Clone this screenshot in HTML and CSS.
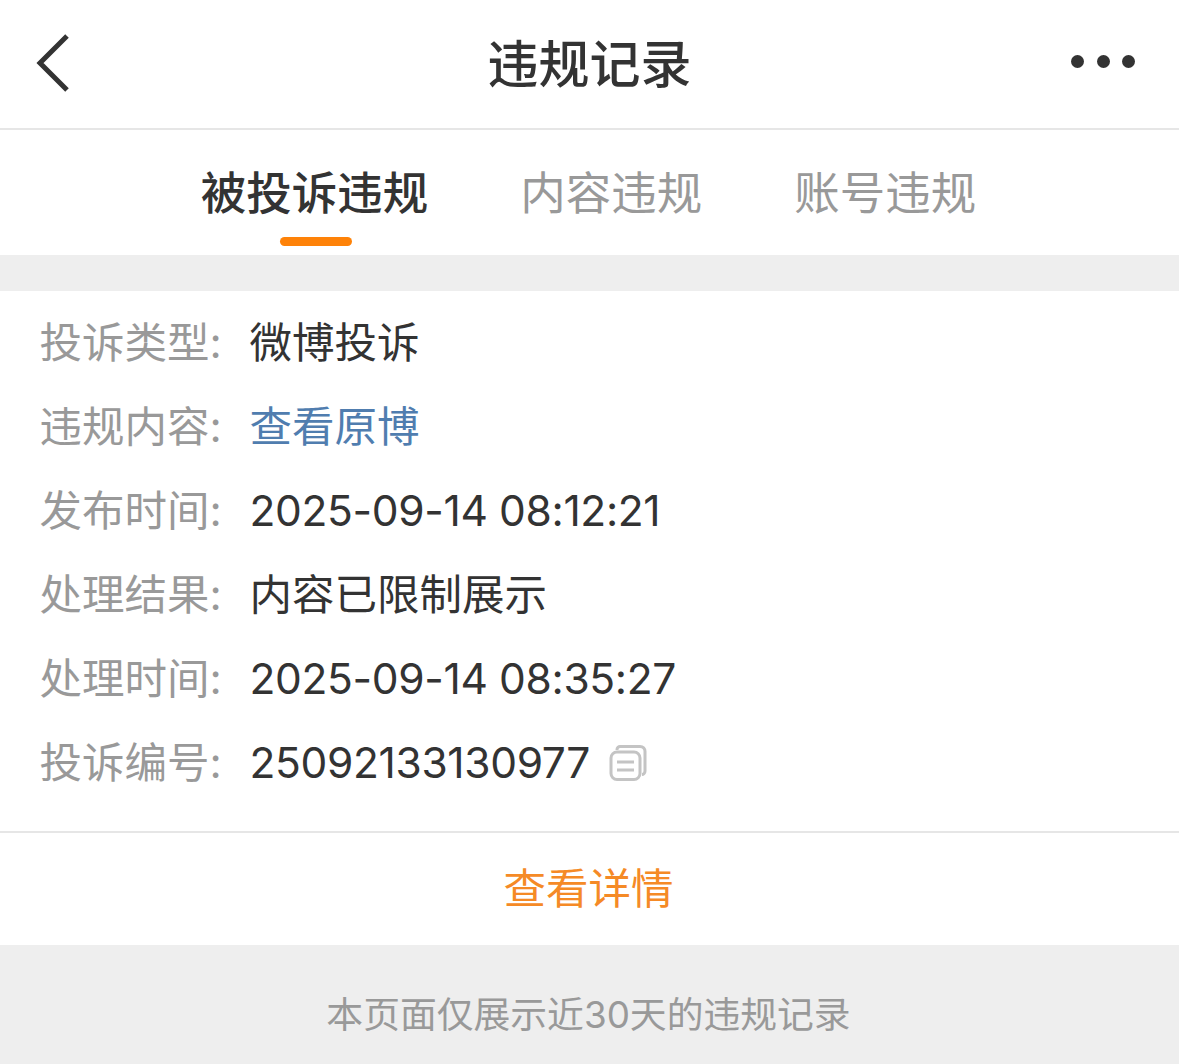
FILE: index.html
```html
<!DOCTYPE html>
<html lang="zh-CN">
<head>
<meta charset="utf-8">
<title>违规记录</title>
<link rel="stylesheet" href="styles.css">
</head>
<body>
<header class="nav">
  <svg class="back" width="34" height="58" viewBox="0 0 34 58"><path d="M32 2 5 29l27 27" fill="none" stroke="#333" stroke-width="5"/></svg>
  <h1 class="title">违规记录</h1>
  <div class="more"><i></i><i></i><i></i></div>
</header>
<nav class="tabs">
  <div class="tab active">被投诉违规<span class="bar"></span></div>
  <div class="tab">内容违规</div>
  <div class="tab">账号违规</div>
</nav>
<main class="card">
  <dl class="rows">
    <div class="row"><dt>投诉类型:</dt><dd>微博投诉</dd></div>
    <div class="row"><dt>违规内容:</dt><dd class="link">查看原博</dd></div>
    <div class="row"><dt>发布时间:</dt><dd class="num">2025-09-14 08:12:21</dd></div>
    <div class="row"><dt>处理结果:</dt><dd>内容已限制展示</dd></div>
    <div class="row"><dt>处理时间:</dt><dd class="num">2025-09-14 08:35:27</dd></div>
    <div class="row"><dt>投诉编号:</dt><dd class="num">25092133130977</dd>
      <svg class="copy" width="38" height="36" viewBox="0 0 38 36" fill="none" stroke="#c4c4c4" stroke-width="3"><path d="M8 5V4.500C8 2.800 9.500 1.500 11 1.500H31C34 1.500 36 3.500 36 6.500V26C36 28 34.500 29.500 33 29.500"/><rect x="2" y="7" width="29" height="27.500" rx="6"/><path d="M8 17H25M8 25H25"/></svg>
    </div>
  </dl>
  <div class="detail">查看详情</div>
</main>
<footer class="foot">本页面仅展示近30天的违规记录</footer>
</body>
</html>
```
FILE: styles.css
```css
* { box-sizing: border-box; }
html, body { margin: 0; padding: 0; }
body {
  width: 1179px;
  height: 1064px;
  overflow: hidden;
  background: #fff;
  color: #333;
  font-family: Inter, "Noto Sans CJK SC", "Noto Sans", sans-serif;
}
.nav {
  height: 130px;
  border-bottom: 2px solid #e6e6e6;
  display: flex;
  align-items: center;
  justify-content: space-between;
  padding: 0 44px 0 35px;
  position: relative;
}
.back { margin-bottom: 2px; }
.title {
  position: absolute;
  left: 0;
  right: 0;
  top: 32px;
  margin: 0;
  text-align: center;
  font-size: 51px;
  line-height: 66px;
  font-weight: 500;
}
.more { display: flex; gap: 12.500px; margin-bottom: 5px; }
.more i { width: 13px; height: 13px; border-radius: 50%; background: #333; display: block; }
.tabs {
  height: 125px;
  display: flex;
  justify-content: center;
  gap: 92px;
  padding: 33px 2px 0 0;
}
.tab {
  position: relative;
  font-size: 45.500px;
  line-height: 62px;
  color: #999;
}
.tab.active { color: #333; font-weight: 500; }
.bar {
  position: absolute;
  left: 79px;
  top: 74px;
  width: 72px;
  height: 9px;
  border-radius: 5px;
  background: #fe8208;
}
.card {
  border-top: 36px solid #eeeeee;
}
.rows { margin: 0; padding: 10px 0 26px 39.500px; height: 540px; }
.row {
  display: flex;
  align-items: center;
  height: 84px;
  font-size: 42.500px;
  line-height: 60px;
}
.row dt { width: 210px; color: #999; }
.row dd { margin: 0; color: #333; }
.row dd.link { color: #507daf; }
.row dd.num { letter-spacing: -0.350px; }
.copy { margin-left: 19px; }
.detail {
  height: 114px;
  border-top: 2px solid #e6e6e6;
  padding: 0 2px 8px 0;
  display: flex;
  align-items: center;
  justify-content: center;
  font-size: 42.500px;
  color: #f58a26;
}
.foot {
  height: 119px;
  background: #eeeeee;
  padding: 14px 2px 0 0;
  display: flex;
  align-items: center;
  justify-content: center;
  font-size: 36.800px;
  color: #999;
}
```
